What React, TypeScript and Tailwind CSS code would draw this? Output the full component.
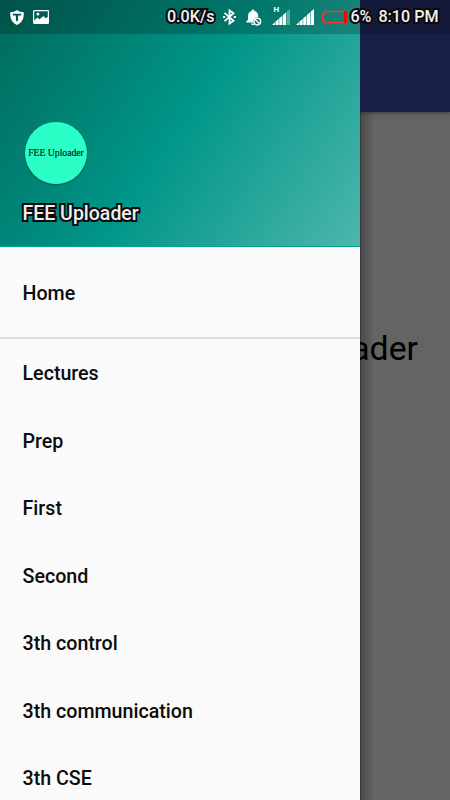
import React from 'react';
import { clsx } from 'clsx';

const lectureItems = [
  'Lectures',
  'Prep',
  'First',
  'Second',
  '3th control',
  '3th communication',
  '3th CSE',
];

const outlined = 'font-medium text-[#f0f0f0] [paint-order:stroke] [-webkit-text-stroke:4px_#0a0a0a]';

const ShieldIcon = () => (
  <svg className="w-[14px] h-[15px] shrink-0" viewBox="0 0 14 15">
    <path d="M7 0C5 1.5 2.7 2.2 0.2 2.3C0 8.5 1.7 12.7 7 15C12.3 12.7 14 8.5 13.8 2.3C11.3 2.2 9 1.5 7 0Z" fill="#fff" />
    <path d="M2.6 3.7h8.800l-.5 1.700H8.100v5.100L7 11.500l-1.100-1V5.400H3.100Z" fill="#00574c" />
  </svg>
);

const PictureIcon = () => (
  <svg className="w-4 h-[14px] shrink-0" viewBox="0 0 16 14">
    <rect x="0.600" y="0.600" width="14.800" height="12.800" rx="0.700" fill="none" stroke="#fff" strokeWidth="1.200" />
    <path d="M1 10.800L4.300 7.600L6.500 9.200L10.600 6L12.500 8.200L15 7.100V13H1Z" fill="#fff" />
    <circle cx="4.900" cy="3.900" r="1.500" fill="#fff" />
  </svg>
);

const BluetoothIcon = () => (
  <svg className="w-[13px] h-[16px] shrink-0" viewBox="0 0 13 16" fill="none" stroke="#fff">
    <path d="M1.500 3.900L10.500 11.700L6.500 14.600V1.400L10.500 4.300L1.500 12.100" strokeWidth="1.800" />
    <path d="M0 8h2.200M10.800 8H13" strokeWidth="1.800" />
  </svg>
);

const BellIcon = () => (
  <svg className="w-[16px] h-[17px] shrink-0" viewBox="0 0 16 17">
    <path d="M7 0.500C7.900 0.500 8.400 1.200 8.400 2C11 2.700 12.200 4.500 12.200 7V9L14 13.500H0.300V12.500L2.100 10.500V7C2.100 4.500 3.200 2.700 5.600 2C5.600 1.200 6.100 0.500 7 0.500Z" fill="#fff" />
    <path d="M5 14.500h3.600v1.500H7C6 16 5.300 15.500 5 14.500Z" fill="#fff" />
    <circle cx="11.300" cy="12.600" r="4.300" fill="#006b5e" />
    <circle cx="11.300" cy="12.600" r="3.300" fill="none" stroke="#fff" strokeWidth="1.500" />
    <path d="M9.200 10.500l4.200 4.200" stroke="#fff" strokeWidth="1.400" />
  </svg>
);

const SignalIcon = ({ weak = false }: { weak?: boolean }) => (
  <svg className="w-[18px] h-[16px] shrink-0" viewBox="0 0 18 16" fill="#fff">
    <path d="M0 16L3 13.200V16Z" />
    <path d="M3.500 12.600L6.700 10V16H3.500Z" />
    <path d="M7.200 9.300L10.400 6.700V16H7.200Z" />
    <path d="M10.900 6L14.100 3.400V16H10.900Z" />
    <path d="M14.600 2.700L18 0V16H14.600Z" opacity={weak ? 0.35 : 1} />
  </svg>
);

const BatteryIcon = () => (
  <svg className="w-[25px] h-[14px] shrink-0" viewBox="0 0 25 14">
    <path d="M2 1.500H24V12.500H2V10H0.700V4H2Z" fill="none" stroke="#f0372f" strokeWidth="1.500" />
    <rect x="22" y="1" width="2.800" height="12" fill="#f00" />
  </svg>
);

const StatusBar = () => (
  <div className="absolute inset-x-0 top-0 z-20 h-[34px] bg-black/20 flex items-center pl-[10px] pr-[11.500px] text-[16.100px]">
    <ShieldIcon />
    <div className="ml-[9px]">
      <PictureIcon />
    </div>
    <span className={clsx('ml-auto pt-px', outlined)}>0.0K/s</span>
    <div className="ml-[9px]">
      <BluetoothIcon />
    </div>
    <div className="ml-[10px]">
      <BellIcon />
    </div>
    <div className="relative ml-[10px]">
      <span className="absolute left-px -top-[3px] text-[8px] leading-none font-bold text-white">H</span>
      <SignalIcon weak />
    </div>
    <div className="ml-[6px]">
      <SignalIcon />
    </div>
    <div className="ml-[8px] mr-[3px]">
      <BatteryIcon />
    </div>
    <span className={clsx('pt-px', outlined)}>6%</span>
    <span className={clsx('ml-[7px] pt-px', outlined)}>8:10 PM</span>
  </div>
);

const DrawerItem = ({ label }: { label: string }) => (
  <li className="h-[67.500px] shrink-0 flex items-center px-[22.500px] text-[19.650px] font-medium text-[#0c0c0c]">
    {label}
  </li>
);

const Drawer = () => (
  <aside className="absolute left-0 top-0 z-10 w-[360px] h-full overflow-hidden bg-[#fafafa] flex flex-col">
    {/* Header */}
    <header className="h-[247px] shrink-0 flex flex-col justify-end items-start px-[22.500px] pb-[19px] border-b border-[#009f93] bg-[linear-gradient(124.450deg,#00695c_0%,#009688_50%,#4db6ac_100%)]">
      <div className="ml-[2px] pl-px size-[62px] rounded-full bg-[#2bffc7] shadow-[0_1px_2px_rgba(0,0,0,0.350)] flex items-center justify-center whitespace-nowrap font-['Liberation_Serif',serif] text-[9.700px] leading-none text-[#022a22] [-webkit-text-stroke:0.2px_#022a22]">
        FEE Uploader
      </div>
      <h1 className={clsx('mt-[17px] text-[19.500px] leading-[26px]', outlined)}>FEE Uploader</h1>
    </header>

    {/* Menu */}
    <ul className="pt-[13px] pb-[9.500px] border-b-2 border-[#dadada] shrink-0">
      <DrawerItem label="Home" />
    </ul>
    <ul className="pt-px flex flex-col">
      {lectureItems.map((label) => (
        <DrawerItem key={label} label={label} />
      ))}
    </ul>
  </aside>
);

const App: React.FC = () => (
  <div className="relative w-[450px] h-[800px] overflow-hidden bg-[#646464] font-[Roboto,sans-serif] flex flex-col">
    <div className="relative h-[112px] shrink-0 bg-[#192048] shadow-[0_1px_4px_rgba(0,0,0,0.400)]" />
    <main className="flex-1 flex justify-end pt-[216.500px] pr-[32px]">
      <p className="text-[33.750px] leading-[40px] text-black">FEE Uploader</p>
    </main>
    {/* Shade cast by the open drawer */}
    <div className="absolute left-[360px] top-[112px] bottom-0 w-[14px] border-l border-black/40 bg-linear-to-r from-black/25 to-transparent" />
    <Drawer />
    <StatusBar />
  </div>
);

export default App;
